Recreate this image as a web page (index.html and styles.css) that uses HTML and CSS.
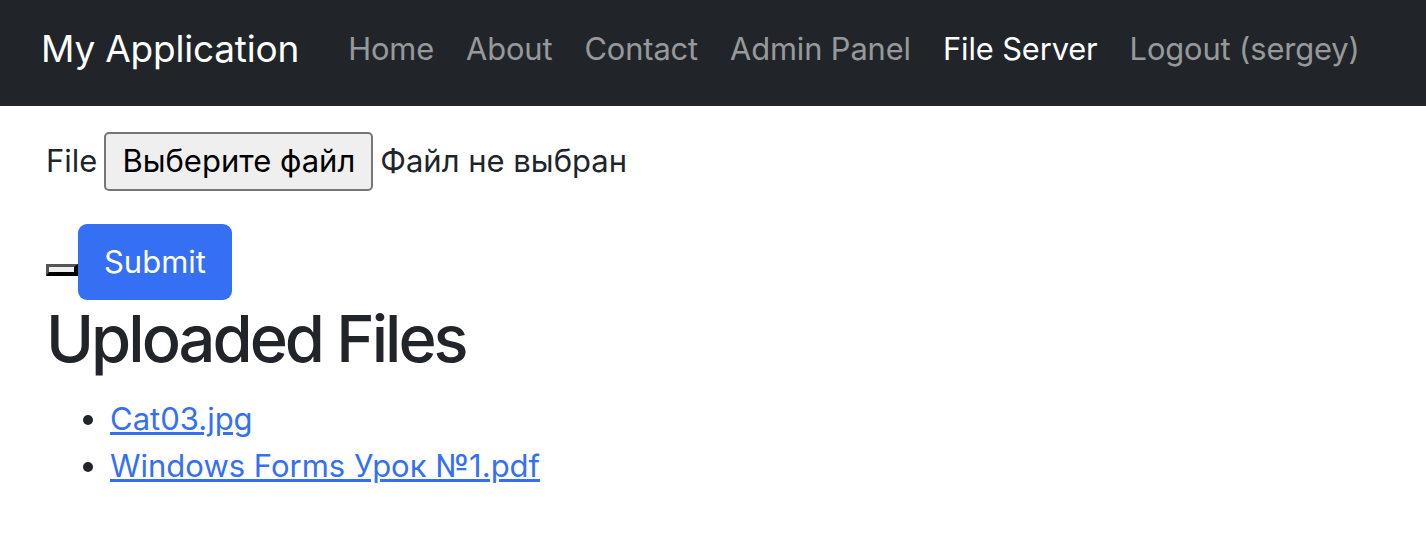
FILE: index.html
```html
<!DOCTYPE html>
<html lang="ru">
<head>
<meta charset="utf-8">
<title>File Server</title>
<link rel="stylesheet" href="styles.css">
</head>
<body>
<nav class="navbar">
  <a class="brand" href="#">My Application</a>
  <ul class="nav">
    <li><a class="nav-link" href="#">Home</a></li>
    <li><a class="nav-link" href="#">About</a></li>
    <li><a class="nav-link" href="#">Contact</a></li>
    <li><a class="nav-link" href="#">Admin Panel</a></li>
    <li><a class="nav-link active" href="#">File Server</a></li>
    <li><a class="nav-link" href="#">Logout (sergey)</a></li>
  </ul>
</nav>
<main class="content">
  <form class="upload">
    <div class="file-row">
      <label class="file-label">File</label>
      <span class="file-btn">Выберите файл</span>
      <span class="file-status">Файл не выбран</span>
    </div>
    <div class="submit-row">
      <span class="hidden-input"></span>
      <button type="button" class="btn-primary">Submit</button>
    </div>
  </form>
  <h1 class="title">Uploaded Files</h1>
  <ul class="files">
    <li><a href="#">Cat03.jpg</a></li>
    <li><a href="#">Windows Forms Урок №1.pdf</a></li>
  </ul>
</main>
</body>
</html>
```
FILE: styles.css
```css
* { box-sizing: border-box; }
html, body { margin: 0; padding: 0; }
body {
  font-family: Inter, "Noto Sans", sans-serif;
  font-size: 31px;
  line-height: 1.5;
  color: #212529;
  background: #fff;
}
.navbar {
  height: 106px;
  background: #212529;
  display: flex;
  align-items: center;
  padding-left: 41px;
  padding-bottom: 8px;
}
.brand {
  color: #fff;
  text-decoration: none;
  font-size: 37px;
  margin-right: 33px;
  letter-spacing: -0.2px;
}
.nav {
  display: flex;
  list-style: none;
  margin: 0;
  padding: 0;
}
.nav-link {
  display: block;
  padding: 0 16px;
  color: rgba(255,255,255,0.55);
  text-decoration: none;
  font-size: 30.8px;
  letter-spacing: -0.1px;
}
.nav-link.active { color: #fff; }
.content { padding: 0 46px; }
.upload { margin: 0; }
.file-row {
  display: flex;
  align-items: center;
  padding-top: 23px;
  height: 88px;
}
.file-label { margin-right: 7px; }
.file-btn {
  height: 59px;
  padding: 0 16px;
  display: flex;
  align-items: center;
  background: #efefef;
  border: 2px solid #767676;
  border-radius: 5px;
  color: #000;
  margin-right: 7px;
}
.submit-row {
  display: flex;
  align-items: flex-end;
  margin-top: 30px;
  height: 76px;
}
.hidden-input {
  width: 32px;
  height: 12px;
  border-style: solid;
  border-width: 3px 4px 4px 3px;
  border-color: #555 #000 #000 #555;
  background: #efefef;
  margin-bottom: 24px;
}
.btn-primary {
  font: inherit;
  width: 154px;
  height: 76px;
  background: #3570f4;
  color: #fff;
  border: 0;
  border-radius: 9px;
  padding: 0;
}
.title {
  font-size: 65px;
  font-weight: 500;
  line-height: 1.2;
  letter-spacing: -3px;
  margin: 0 0 18px;
}
.files {
  margin: 0;
  padding-left: 64px;
}
.files a { color: #3570f4; text-decoration: underline; }
```
